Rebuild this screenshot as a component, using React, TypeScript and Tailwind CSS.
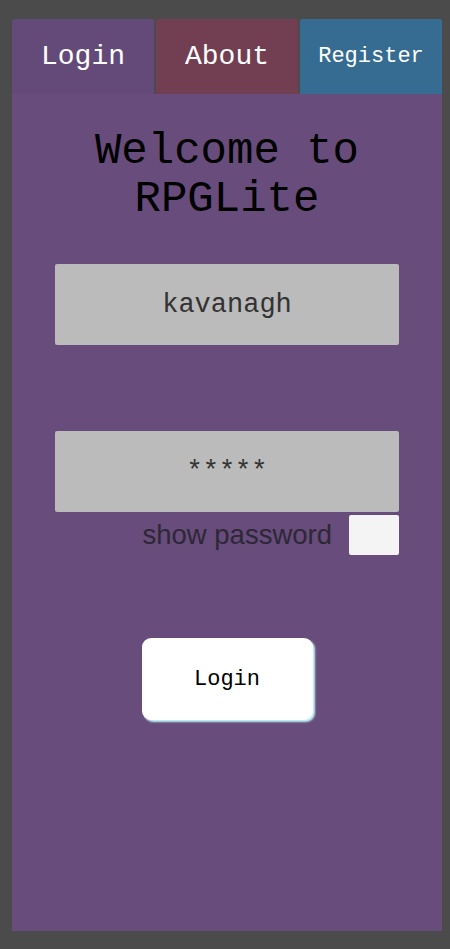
import { useState } from 'react';

const mono = { fontFamily: '"Liberation Mono", "DejaVu Sans Mono", monospace' };

const App = () => {
  const [username, setUsername] = useState('kavanagh');
  const [password, setPassword] = useState('*****');
  const [showPassword, setShowPassword] = useState(false);

  return (
    <div className="w-[450px] h-[949px] bg-[#4b4b4b] pt-[19px] pl-[12px] pr-[8px] pb-[18px] flex flex-col">
      <div className="flex gap-[2px] h-[75px]" style={mono}>
        <button className="flex-1 bg-[#644a78] rounded-t-[2px] text-white text-[28px]">Login</button>
        <button className="flex-1 bg-[#723e51] rounded-t-[2px] text-white text-[28px]">About</button>
        <button className="flex-1 bg-[#366c92] rounded-t-[2px] text-white text-[22px]">Register</button>
      </div>

      <div className="flex-1 bg-[#684c7c] flex flex-col items-center">
        <h1 className="mt-[33px] text-[44px] leading-[48px] text-black text-center" style={mono}>
          Welcome to
          <br />
          RPGLite
        </h1>

        <input
          value={username}
          onChange={(e) => setUsername(e.target.value)}
          className="mt-[41px] w-[344px] h-[81px] bg-[#bbbbbb] rounded-[2px] text-center text-[27px] text-[#333333] outline-none"
          style={mono}
        />

        <input
          value={password}
          onChange={(e) => setPassword(e.target.value)}
          className="mt-[86px] w-[344px] h-[81px] bg-[#bbbbbb] rounded-[2px] text-center text-[27px] text-[#333333] outline-none"
          style={mono}
        />

        <div className="w-[344px] flex justify-end items-center gap-[17px] mt-[2px]">
          <span
            className="text-[27.5px] text-[#2d2836]"
            style={{ fontFamily: '"Liberation Sans", Arial, sans-serif' }}
          >
            show password
          </span>
          <button
            onClick={() => setShowPassword(!showPassword)}
            className="w-[50px] h-[40px] bg-[#f4f4f4] rounded-[2px]"
          />
        </div>

        <button
          className="mt-[83px] w-[171px] h-[82px] bg-white rounded-[9px] shadow-[2px_2px_2px_#bff4f8] text-[22px] text-black"
          style={mono}
        >
          Login
        </button>
      </div>
    </div>
  );
};

export default App;
